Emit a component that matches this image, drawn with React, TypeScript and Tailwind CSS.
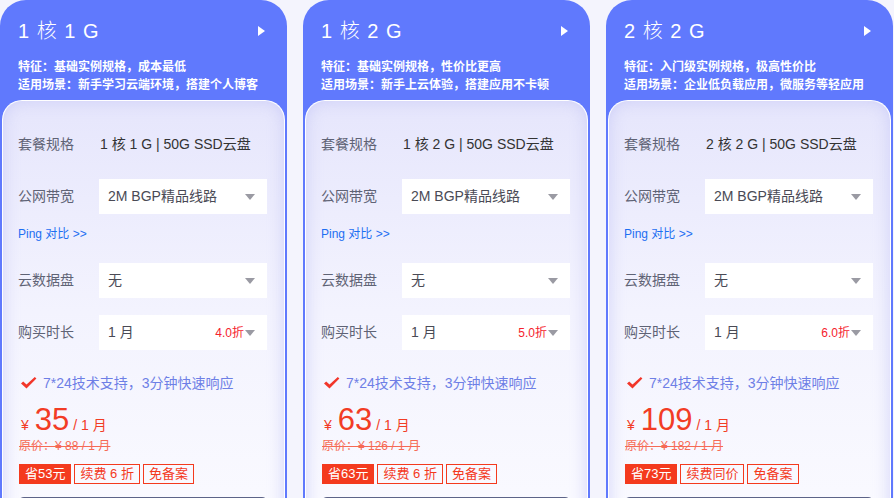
import React from "react";

type Plan = {
  title: string;
  feature: string;
  scene: string;
  spec: string;
  discount: string;
  price: string;
  origin: string;
  save: string;
  renew: string;
};

const plans: Plan[] = [
  {
    title: "1 核 1 G",
    feature: "特征：基础实例规格，成本最低",
    scene: "适用场景：新手学习云端环境，搭建个人博客",
    spec: "1 核 1 G | 50G SSD云盘",
    discount: "4.0折",
    price: "35",
    origin: "原价：¥ 88 / 1 月",
    save: "省53元",
    renew: "续费 6 折",
  },
  {
    title: "1 核 2 G",
    feature: "特征：基础实例规格，性价比更高",
    scene: "适用场景：新手上云体验，搭建应用不卡顿",
    spec: "1 核 2 G | 50G SSD云盘",
    discount: "5.0折",
    price: "63",
    origin: "原价：¥ 126 / 1 月",
    save: "省63元",
    renew: "续费 6 折",
  },
  {
    title: "2 核 2 G",
    feature: "特征：入门级实例规格，极高性价比",
    scene: "适用场景：企业低负载应用，微服务等轻应用",
    spec: "2 核 2 G | 50G SSD云盘",
    discount: "6.0折",
    price: "109",
    origin: "原价：¥ 182 / 1 月",
    save: "省73元",
    renew: "续费同价",
  },
];

const Caret = () => (
  <svg width="10" height="6" viewBox="0 0 10 6" className="shrink-0">
    <path d="M0 0 L10 0 L5 6 Z" fill="#9a9aa3" />
  </svg>
);

const Select = ({ value, extra }: { value: string; extra?: string }) => (
  <div className="flex items-center h-[35px] w-[168px] bg-white pl-[9px] pr-[12px]">
    <span className="flex-1 text-[14px] text-[#4a4a55]">{value}</span>
    {extra && <span className="text-[12px] text-[#f5222d] mr-[1px]">{extra}</span>}
    <Caret />
  </div>
);

const Row = ({ label, children }: { label: string; children: React.ReactNode }) => (
  <div className="flex items-center h-[35px]">
    <span className="w-[81px] text-[14px] text-[#5f6375]">{label}</span>
    {children}
  </div>
);

const Card = ({ p }: { p: Plan }) => (
  <div className="w-[287px] shrink-0 rounded-t-[26px] bg-[#6079fd] px-[2px]">
    <div className="h-[100px] pl-[16px] pr-[20px] text-white">
      <div className="flex items-center justify-between pt-[16px] h-[46px]">
        <span className="text-[20px] font-light tracking-[1px]">{p.title}</span>
        <svg width="7" height="10" viewBox="0 0 7 10">
          <path d="M0 0 L7 5 L0 10 Z" fill="#ffffff" />
        </svg>
      </div>
      <div className="mt-[12px] text-[12px] leading-[18px] font-semibold">
        <div>{p.feature}</div>
        <div>{p.scene}</div>
      </div>
    </div>
    <div className="rounded-t-[20px] border-x border-t border-white bg-gradient-to-b from-[#e6e6fc] via-[#f3f3fe] to-[#fafaff] shadow-[inset_0_0_16px_rgba(196,198,245,0.75)] pl-[15px] pr-[17px] pt-[26px] h-[420px]">
      <Row label="套餐规格">
        <span className="text-[14px] text-[#333333] pl-[1px]">{p.spec}</span>
      </Row>
      <div className="mt-[17px]">
        <Row label="公网带宽">
          <Select value="2M BGP精品线路" />
        </Row>
      </div>
      <div className="mt-[10px] h-[20px] leading-[20px] text-[12px] text-[#1d6ff2]">Ping 对比 &gt;&gt;</div>
      <div className="mt-[19px]">
        <Row label="云数据盘">
          <Select value="无" />
        </Row>
      </div>
      <div className="mt-[17px]">
        <Row label="购买时长">
          <Select value="1 月" extra={p.discount} />
        </Row>
      </div>
      <div className="mt-[23px] flex items-center h-[20px]">
        <svg width="17" height="14" viewBox="0 0 17 14" className="ml-[2px] mr-[6px]">
          <path d="M1 7.5 L3.2 5.6 L6.5 8.6 L14.8 1 L16.4 2.6 L6.5 12.6 Z" fill="#f2362a" />
        </svg>
        <span className="text-[14px] text-[#6e7fe6]">7*24技术支持，3分钟快速响应</span>
      </div>
      <div className="mt-[10px] flex items-baseline text-[#f23c25] h-[34px]">
        <span className="text-[14px] ml-[3px] mr-[6px]">¥</span>
        <span className="text-[31px] leading-[34px]">{p.price}</span>
        <span className="text-[14px] ml-[4px]">/ 1 月</span>
      </div>
      <div className="mt-[1px] text-[12px] leading-[16px] text-[#f66a55] line-through ml-[1px]">{p.origin}</div>
      <div className="mt-[10px] flex gap-[3px] ml-[1px]">
        <span className="h-[20px] px-[6px] bg-[#f43a1e] text-white text-[13px] leading-[20px]">{p.save}</span>
        <span className="h-[20px] px-[5px] border border-[#f43a1e] text-[#f43a1e] text-[13px] leading-[18px]">{p.renew}</span>
        <span className="h-[20px] px-[5px] border border-[#f43a1e] text-[#f43a1e] text-[13px] leading-[18px]">免备案</span>
      </div>
      <div className="mt-[13px] h-[40px] w-[250px] rounded-[6px] bg-[#5d6488]" />
    </div>
  </div>
);

export default function App() {
  return (
    <div
      className="h-[498px] w-[894px] overflow-hidden bg-[#f4f4fd] flex gap-[16px]"
      style={{ fontFamily: '"Liberation Sans", "Noto Sans CJK SC", sans-serif' }}
    >
      {plans.map((p) => (
        <Card key={p.title} p={p} />
      ))}
    </div>
  );
}
